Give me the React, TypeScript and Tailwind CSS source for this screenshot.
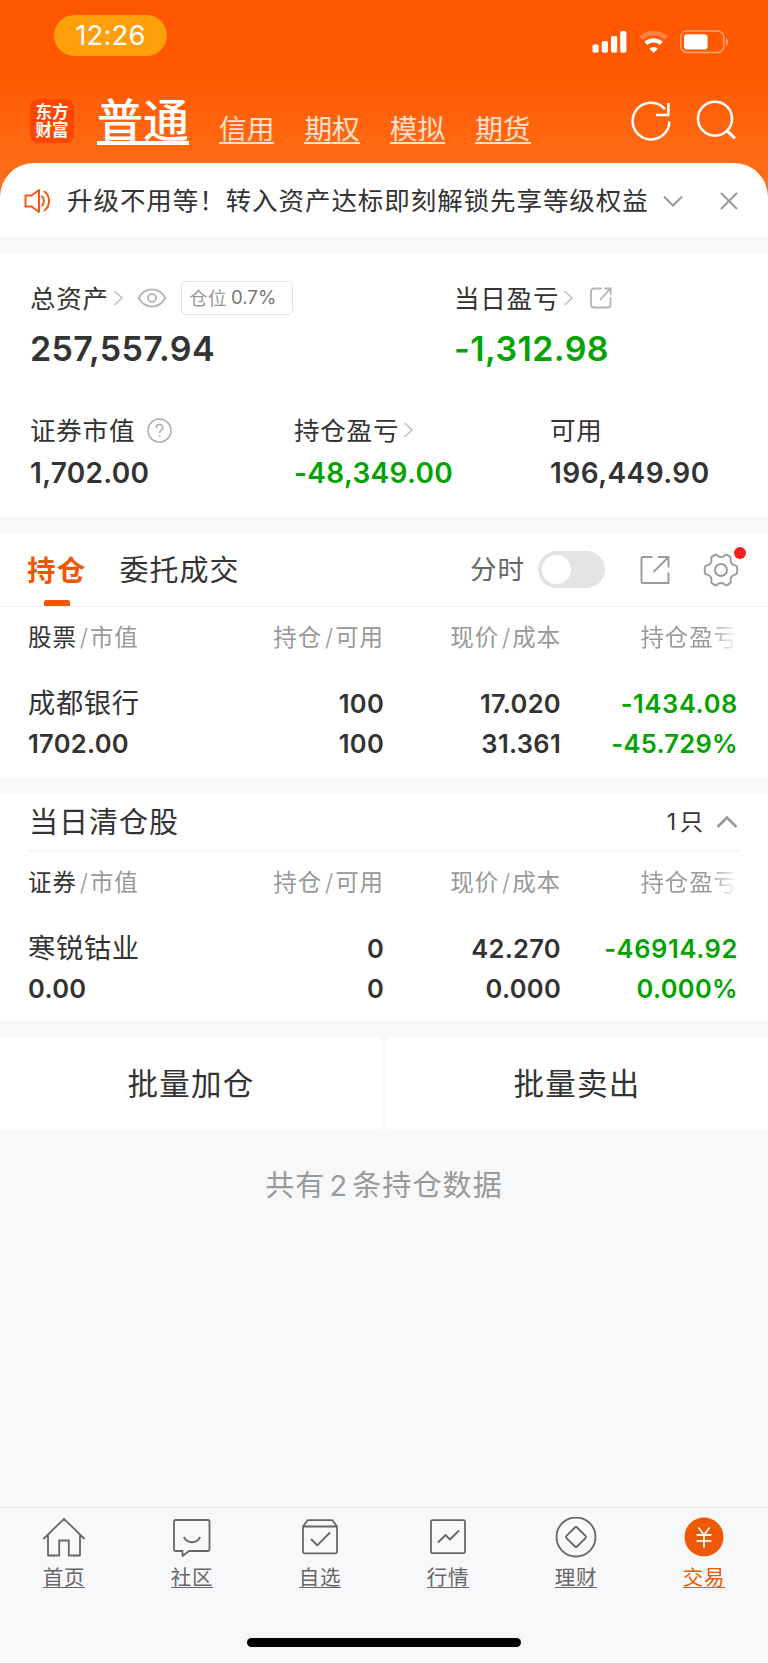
import type { ReactNode } from "react";
import clsx from "clsx";

interface Holding {
  name: string;
  value: string;
  amount: string;
  available: string;
  price: string;
  cost: string;
  profit: string;
  rate: string;
}

const holdings: Holding[] = [
  {
    name: "成都银行",
    value: "1702.00",
    amount: "100",
    available: "100",
    price: "17.020",
    cost: "31.361",
    profit: "-1434.08",
    rate: "-45.729%",
  },
];

const cleared: Holding[] = [
  {
    name: "寒锐钴业",
    value: "0.00",
    amount: "0",
    available: "0",
    price: "42.270",
    cost: "0.000",
    profit: "-46914.92",
    rate: "0.000%",
  },
];

const accountTabs = ["信用", "期权", "模拟", "期货"];

const cjk = "font-['Inter','Noto_Sans_CJK_SC',sans-serif]";

function StatusBar() {
  return (
    <div className="flex h-[72px] items-start justify-between pl-[54px] pr-[38px] pt-[15px]">
      <div className="flex h-[41px] w-[113px] items-center justify-center rounded-full bg-[#ff9f0a] pt-[1px] text-[27.5px] tracking-[0.2px] text-white">
        12:26
      </div>
      <div className="mt-[15px] flex items-start">
        <svg width="36" height="24" viewBox="0 0 36 24" fill="#fff">
          <rect x="0.5" y="14.5" width="6.2" height="8.3" rx="1.8" />
          <rect x="9.8" y="11" width="6.2" height="11.8" rx="1.8" />
          <rect x="19" y="6" width="6.2" height="16.8" rx="1.8" />
          <rect x="28.2" y="1" width="6.2" height="21.8" rx="1.8" />
        </svg>
        <svg className="ml-[11px]" width="30" height="24" viewBox="0 0 30 24" fill="none">
          <path d="M2 8.2a18.6 18.6 0 0 1 25.2 0" stroke="#fff" strokeOpacity="0.25" strokeWidth="4.6" />
          <path d="M6.8 13.4a11.6 11.6 0 0 1 15.6 0" stroke="#fff" strokeWidth="4.2" />
          <path d="M14.6 23l-4.2-4.3a6.2 6.2 0 0 1 8.4 0z" fill="#fff" />
        </svg>
        <svg className="ml-[11px]" width="50" height="24" viewBox="0 0 50 24" fill="none">
          <rect x="0.8" y="1" width="43" height="21.4" rx="6" stroke="#fff" strokeOpacity="0.45" strokeWidth="1.5" />
          <rect x="4" y="4.2" width="23.6" height="15.4" rx="3.4" fill="#fff" />
          <path d="M46 8v8c2.6-1.4 2.6-6.6 0-8z" fill="#fff" fillOpacity="0.5" />
        </svg>
      </div>
    </div>
  );
}

function Header() {
  return (
    <div className="flex h-[91px] items-start pl-[30px] pr-[32px]">
      <div className="mt-[27px] flex h-[44px] w-[44px] flex-col items-center justify-center rounded-[8px] bg-[#ff4600] text-[16.5px] font-bold leading-[18px] text-white">
        <span>东方</span>
        <span>财富</span>
      </div>
      <div className="ml-[23px] mt-[16px] h-[57px] w-[92px] whitespace-nowrap border-b-[4px] border-white text-[46px] font-medium leading-[65px] text-white">
        普通
      </div>
      <div className="ml-[30px] mt-[38px] flex gap-[30px]">
        {accountTabs.map((tab) => (
          <div
            key={tab}
            className="h-[34px] w-[55.4px] whitespace-nowrap border-b-[2px] border-white/80 text-[27.7px] leading-[38px] text-white/80"
          >
            {tab}
          </div>
        ))}
      </div>
      <div className="ml-auto mt-[28px] flex gap-[22px]">
        <svg width="42" height="42" viewBox="0 0 42 42" fill="none" stroke="#fff" strokeWidth="2.5">
          <path d="M39.4 21.5a18.4 18.4 0 1 1-4.4-12.4" />
          <path d="M38.4 3v12H26" />
        </svg>
        <svg width="42" height="42" viewBox="0 0 42 42" fill="none" stroke="#fff" strokeWidth="2.5">
          <circle cx="21" cy="18.7" r="17" />
          <path d="M32.6 30.4l8.4 8" strokeWidth="3" />
        </svg>
      </div>
    </div>
  );
}

function Notice() {
  return (
    <div className="flex h-[74px] items-center rounded-t-[34px] bg-white pl-[24px] pr-[29px] pt-[1px]">
      <svg width="28" height="26" viewBox="0 0 28 26" fill="none" stroke="#f35b0c" strokeWidth="2" strokeLinejoin="round" strokeLinecap="round">
        <path d="M1.500 7.500h6L15 2v22l-7.500-5.500h-6z" />
        <path d="M18.200 8.500c2.200 2.500 2.200 6.500 0 9M20.500 3.500c6 4.500 6 14.500 0 19" />
      </svg>
      <span className="ml-[15px] mt-[1px] whitespace-nowrap text-[25.500px] tracking-[0.940px] text-[#333]">
        升级不用等！转入资产达标即刻解锁先享等级权益
      </span>
      <svg className="ml-auto" width="22" height="14" viewBox="0 0 22 14" fill="none" stroke="#999" strokeWidth="2">
        <path d="M2 2.500l9 9 9-9" />
      </svg>
      <svg className="ml-[35px]" width="20" height="20" viewBox="0 0 20 20" fill="none" stroke="#999" strokeWidth="2">
        <path d="M2 2l16 16M18 2L2 18" />
      </svg>
    </div>
  );
}

function Arrow() {
  return (
    <svg className="ml-[4px]" width="11" height="18" viewBox="0 0 11 18" fill="none" stroke="#c4c4c4" strokeWidth="1.700">
      <path d="M1.500 2l7.500 7-7.500 7" />
    </svg>
  );
}

function Label({ children }: { children: ReactNode }) {
  return (
    <span className="mt-[1px] whitespace-nowrap text-[25.500px] leading-[34px] tracking-[0.800px] text-[#333]">
      {children}
    </span>
  );
}

function Assets() {
  return (
    <div className="h-[264px] bg-white pl-[30px] pt-[28px]">
      <div className="grid grid-cols-[424px_1fr]">
        <div>
          <div className="flex h-[34px] items-center">
            <Label>总资产</Label>
            <Arrow />
            <svg className="ml-[13px]" width="30" height="22" viewBox="0 0 30 22" fill="none" stroke="#b8b8b8" strokeWidth="2">
              <path d="M1.800 11C7.500-0.300 22.500-0.300 28.200 11 22.500 22.300 7.500 22.300 1.800 11z" />
              <circle cx="15" cy="11" r="4" />
            </svg>
            <div className="ml-[14px] flex h-[34px] w-[112px] items-center whitespace-nowrap rounded-[5px] border border-[#e4e4e4] pl-[7px] text-[18.500px] text-[#999]">
              <span className="mt-[1px] tracking-[0.500px]">仓位</span>
              <span className="ml-[4px] mt-[1px] text-[18.700px] text-[#777]">0.7%</span>
            </div>
          </div>
          <p className="mt-[13px] text-[34px] font-semibold leading-[42px] tracking-[0.350px] text-[#333]">257,557.94</p>
        </div>
        <div>
          <div className="flex h-[34px] items-center">
            <Label>当日盈亏</Label>
            <Arrow />
            <svg className="ml-[15px]" width="24" height="24" viewBox="0 0 24 24" fill="none" stroke="#b4b4b4" strokeWidth="1.800" strokeLinecap="round" strokeLinejoin="round">
              <path d="M12 2.500H5A3 3 0 0 0 2 5.500v13a3 3 0 0 0 3 3h13.500a3 3 0 0 0 3-3v-6.500" />
              <path d="M11.500 13.500l10-11M16 2.500h5.700V8" />
            </svg>
          </div>
          <p className="mt-[13px] text-[34px] font-semibold leading-[42px] tracking-[0.400px] text-[#04a304]">-1,312.98</p>
        </div>
      </div>
      <div className="mt-[43px] grid grid-cols-[264px_256px_1fr]">
        <div>
          <div className="flex h-[34px] items-center">
            <Label>证券市值</Label>
            <svg className="ml-[12px]" width="25" height="25" viewBox="0 0 25 25" fill="none" stroke="#aaa" strokeWidth="1.500">
              <circle cx="12.500" cy="12.500" r="11.500" />
              <path d="M9.300 10c0-4.600 6.600-4.400 6.600-.6 0 2.500-3.200 2.600-3.200 5.600M12.700 17v1.800" />
            </svg>
          </div>
          <p className="mt-[9px] text-[28px] font-semibold leading-[34px] tracking-[0.300px] text-[#333]">1,702.00</p>
        </div>
        <div>
          <div className="flex h-[34px] items-center">
            <Label>持仓盈亏</Label>
            <Arrow />
          </div>
          <p className="mt-[9px] text-[28px] font-semibold leading-[34px] tracking-[0.300px] text-[#04a304]">-48,349.00</p>
        </div>
        <div>
          <div className="flex h-[34px] items-center">
            <Label>可用</Label>
          </div>
          <p className="mt-[9px] text-[28px] font-semibold leading-[34px] tracking-[0.450px] text-[#333]">196,449.90</p>
        </div>
      </div>
    </div>
  );
}

function Slash() {
  return <span className="ml-[3px] mr-[1px] font-light">/</span>;
}

function HoldingTable({ title, rows }: { title: string; rows: Holding[] }) {
  return (
    <div className="pl-[28px] pr-[30px]">
      <div className="grid h-[61px] grid-cols-[190px_166px_177px_1fr] items-center whitespace-nowrap text-[23.500px] tracking-[0.900px] text-[#999]">
        <div>
          <span className="text-[#333]">{title}</span>
          <Slash />
          市值
        </div>
        <div className="text-right">
          持仓
          <Slash />
          可用
        </div>
        <div className="text-right">
          现价
          <Slash />
          成本
        </div>
        <div className="flex justify-end">
          <span className="bg-linear-to-r from-[#999] from-70% to-white bg-clip-text text-transparent">
            持仓盈亏
          </span>
        </div>
      </div>
      {rows.map((row) => (
        <div
          key={row.name}
          className="mt-[16px] grid grid-cols-[190px_166px_177px_1fr] whitespace-nowrap text-[25.500px] font-semibold leading-[40px] tracking-[0.300px] text-[#333]"
        >
          <div>
            <p className="text-[27.300px] font-normal tracking-[0.600px]">{row.name}</p>
            <p>{row.value}</p>
          </div>
          <div className="text-right">
            <p>{row.amount}</p>
            <p>{row.available}</p>
          </div>
          <div className="text-right">
            <p>{row.price}</p>
            <p>{row.cost}</p>
          </div>
          <div className="text-right text-[#04a304]">
            <p className="tracking-[0.600px]">{row.profit}</p>
            <p>{row.rate}</p>
          </div>
        </div>
      ))}
    </div>
  );
}

function PositionTabs() {
  return (
    <div className="flex h-[74px] items-center border-b border-[#f1f2f4] pl-[27px] pr-[29px]">
      <div className="relative mt-[2px] whitespace-nowrap text-[28.500px] font-bold leading-[40px] tracking-[1.200px] text-[#ee5806]">
        持仓
        <span className="absolute left-[17px] top-[49px] h-[6px] w-[26px] rounded-t-[2px] bg-[#ee5806]" />
      </div>
      <div className="ml-[33px] mt-[2px] whitespace-nowrap text-[29px] tracking-[1.000px] text-[#333]">委托成交</div>
      <div className="ml-auto mt-[1px] whitespace-nowrap text-[26.500px] tracking-[1px] text-[#666]">分时</div>
      <div className="ml-[13px] flex h-[37px] w-[67px] items-center rounded-full bg-[#e3e3e5] pl-[4px]">
        <span className="h-[29px] w-[29px] rounded-full bg-white" />
      </div>
      <svg className="ml-[34px]" width="32" height="32" viewBox="0 0 32 32" fill="none" stroke="#999" strokeWidth="1.900">
        <path d="M13.500 3H4a1.500 1.500 0 0 0-1.500 1.500v23A1.500 1.500 0 0 0 4 29h25.500V18.500" />
        <path d="M14.500 18L29 3.500M19 3h10.500v10.500" />
      </svg>
      <div className="relative ml-[32px]">
        <svg width="36" height="36" viewBox="0 0 36 36" fill="none" stroke="#999" strokeWidth="1.900" strokeLinejoin="round">
          <path d="M14.200 3.300C16 5.500 20 5.500 21.800 3.300Q22.800 2.200 24 2.900L26.900 4.600Q28.200 5.400 27.700 6.900C26.900 9.800 28.600 12.900 32 13.400Q34.200 13.900 34.200 16V20Q34.200 22.100 32 22.600C28.600 23.100 26.900 26.200 27.700 29.100Q28.200 30.600 26.900 31.400L24 33.100Q22.800 33.800 21.800 32.700C20 30.500 16 30.500 14.200 32.700Q13.200 33.800 12 33.100L9.100 31.400Q7.800 30.600 8.300 29.100C9.100 26.200 7.400 23.100 4 22.600Q1.800 22.100 1.800 20V16Q1.800 13.900 4 13.400C7.400 12.900 9.100 9.800 8.300 6.900Q7.800 5.400 9.100 4.600L12 2.900Q13.200 2.200 14.200 3.300z" />
          <circle cx="18" cy="18" r="6" />
        </svg>
        <span className="absolute right-[-7px] top-[-5px] h-[12px] w-[12px] rounded-full bg-[#f5201f]" />
      </div>
    </div>
  );
}

const navItems: { label: string; icon: ReactNode; active?: boolean }[] = [
  {
    label: "首页",
    icon: (
      <>
        <path d="M1.500 22L22 1.800 42.500 22M6 18.500V38.500h11.200V23.500h9.600V38.500H38V18.500" />
      </>
    ),
  },
  {
    label: "社区",
    icon: (
      <>
        <path d="M5.500 3h32.500a1.500 1.500 0 0 1 1.500 1.500v28A1.500 1.500 0 0 1 38 34H19l-6.500 5v-5h-7A1.500 1.500 0 0 1 4 32.500v-28A1.500 1.500 0 0 1 5.500 3z" />
        <path d="M13.800 20c3.800 7 12.600 7 16.400 0" />
      </>
    ),
  },
  {
    label: "自选",
    icon: (
      <>
        <path d="M5 9.500L9.500 3.200h25L39 9.500v25.300a1.500 1.500 0 0 1-1.500 1.500h-31A1.500 1.500 0 0 1 5 34.800zM5 9.500h34" />
        <path d="M13 22l6.300 6.300L32 15.500" />
      </>
    ),
  },
  {
    label: "行情",
    icon: (
      <>
        <rect x="5" y="3.200" width="34" height="33" rx="1.500" />
        <path d="M12 25.500l7.500-7.500 4.500 4.500 9-9" />
      </>
    ),
  },
  {
    label: "理财",
    icon: (
      <>
        <circle cx="22" cy="20" r="19.500" />
        <path d="M20.900 10.500L12.500 18.900q-1.100 1.100 0 2.200l8.400 8.400q1.100 1.100 2.200 0l8.400-8.400q1.100-1.100 0-2.200l-8.400-8.400q-1.100-1.100-2.200 0z" />
      </>
    ),
  },
  {
    label: "交易",
    active: true,
    icon: (
      <>
        <circle cx="22" cy="20" r="19.500" fill="#ee5806" stroke="none" />
        <path d="M16.500 10.500l5.500 7.500 5.500-7.500M22 18V30.500M14.500 18h15M14.500 23.800h15" stroke="#fff" />
      </>
    ),
  },
];

function BottomNav() {
  return (
    <div className="h-[156px] border-t border-[#e6e8ea] bg-[#f8f8fa]">
      <div className="grid grid-cols-6 pt-[9px]">
        {navItems.map((item) => (
          <div key={item.label} className="flex flex-col items-center">
            <svg width="44" height="42" viewBox="0 0 44 42" fill="none" stroke="#666" strokeWidth="1.800" strokeLinejoin="round">
              {item.icon}
            </svg>
            <span
              className={clsx(
                "mt-[4px] h-[25px] w-[42.500px] whitespace-nowrap border-b text-[20.500px] leading-[29px] tracking-[0.700px]",
                item.active ? "border-[#ee5806] text-[#ee5806]" : "border-[#666] text-[#666]"
              )}
            >
              {item.label}
            </span>
          </div>
        ))}
      </div>
      <div className="mx-auto mt-[50px] h-[9px] w-[274px] rounded-full bg-black" />
    </div>
  );
}

export default function App() {
  return (
    <div className={clsx("flex h-[1663px] w-[768px] flex-col overflow-hidden bg-[#f7f8fa]", cjk)}>
      <div className="bg-linear-to-b from-[#ff5800] from-30% to-[#ff7119] to-80%">
        <StatusBar />
        <Header />
        <Notice />
      </div>

      <div className="mt-[16px]">
        <Assets />
      </div>

      {/* Current positions */}
      <div className="mt-[16px] h-[244px] bg-white">
        <PositionTabs />
        <HoldingTable title="股票" rows={holdings} />
      </div>

      {/* Positions closed today */}
      <div className="mt-[16px] h-[228px] bg-white">
        <div className="mx-[28px] flex h-[59px] items-center border-b-2 border-[#f5f6f8]">
          <span className="pl-[1px] pt-[3px] text-[29px] tracking-[1.000px] text-[#333]">当日清仓股</span>
          <span className="ml-auto pt-[2px] text-[23px] text-[#333]">
            1<span className="ml-[4px]">只</span>
          </span>
          <svg className="ml-[13px] mr-[2px]" width="22" height="14" viewBox="0 0 22 14" fill="none" stroke="#999" strokeWidth="2.600">
            <path d="M1.500 12L11 2.500l9.500 9.500" />
          </svg>
        </div>
        <HoldingTable title="证券" rows={cleared} />
      </div>

      <div className="mt-[16px] grid h-[92px] grid-cols-[382px_382px] gap-[4px] text-[30.500px] tracking-[1.300px] text-[#333]">
        <button className="bg-white pt-[1px]">批量加仓</button>
        <button className="bg-white pt-[1px]">批量卖出</button>
      </div>

      <p className="mt-[35px] text-center text-[29px] leading-[44px] tracking-[1.100px] text-[#999]">
        共有<span className="mx-[4px]">2</span>条持仓数据
      </p>

      <div className="mt-auto">
        <BottomNav />
      </div>
    </div>
  );
}
